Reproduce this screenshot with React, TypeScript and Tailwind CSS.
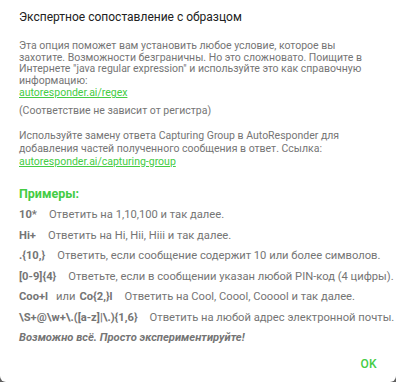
import React from "react";

const examples: { code: React.ReactNode; text: string }[] = [
  { code: "10*", text: "Ответить на 1,10,100 и так далее." },
  { code: "Hi+", text: "Ответить на Hi, Hii, Hiii и так далее." },
  { code: ".{10,}", text: "Ответить, если сообщение содержит 10 или более символов." },
  { code: "[0-9]{4}", text: "Ответьте, если в сообщении указан любой PIN-код (4 цифры)." },
  {
    code: (
      <>
        Coo+l<span className="font-normal ml-[8px] mr-[4px]">или</span>Co{"{2,}"}l
      </>
    ),
    text: "Ответить на Cool, Coool, Cooool и так далее.",
  },
  { code: "\\S+@\\w+\\.([a-z]|\\.){1,6}", text: "Ответить на любой адрес электронной почты." },
];

export default function App() {
  return (
    <div className="w-[396px] h-[382px] bg-[#5f5f5f] font-['Roboto',sans-serif]">
      <div className="h-[382px] bg-white rounded-b-[6px] pl-[19px] pr-[14px] pt-[9px] flex flex-col text-[#757575]">
        <h1 className="text-[12px] leading-[16px] text-[#212121]">
          Экспертное сопоставление с образцом
        </h1>

        <div className="mt-[15px] text-[10.5px] leading-[11.6px]">
          <p>
            Эта опция поможет вам установить любое условие, которое вы захотите. Возможности
            безграничны. Но это сложновато. Поищите в Интернете "java regular expression" и
            используйте это как справочную информацию:
          </p>
          <p className="mt-[0px] leading-[14px]">
            <span className="text-[#44cc44] underline">autoresponder.ai/regex</span>
          </p>
          <p className="mt-[5px]">(Соответствие не зависит от регистра)</p>

          <p className="mt-[13px] leading-[12.8px]">
            Используйте замену ответа Capturing Group в AutoResponder для добавления частей
            полученного сообщения в ответ. Ссылка:{" "}
            <span className="text-[#44cc44] underline">autoresponder.ai/capturing-group</span>
          </p>
        </div>

        <h2 className="mt-[18px] text-[12.5px] leading-[15px] font-bold text-[#44cc44]">
          Примеры:
        </h2>

        <div className="mt-[7px] flex flex-col gap-[7.5px] text-[11.2px] leading-[13px]">
          {examples.map((e, i) => (
            <div key={i} className="flex whitespace-nowrap">
              <span className="font-bold mr-[12px] shrink-0">{e.code}</span>
              <span>{e.text}</span>
            </div>
          ))}
          <p className="font-bold italic">Возможно всё. Просто экспериментируйте!</p>
        </div>

        <div className="mt-auto mb-[9px] flex justify-end pr-[5px]">
          <button className="text-[12px] font-medium text-[#44cc44] tracking-wide">OK</button>
        </div>
      </div>
    </div>
  );
}
